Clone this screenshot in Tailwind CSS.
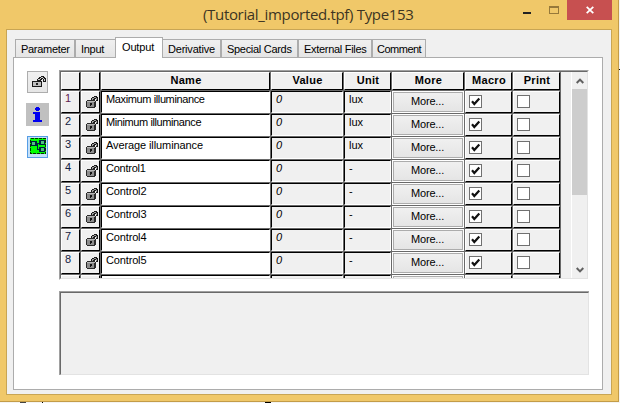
<!DOCTYPE html>
<html lang="en">
<head>
<meta charset="utf-8">
<title>Type153</title>
<script src="https://cdn.jsdelivr.net/npm/@tailwindcss/browser@4"></script>
</head>
<body class="w-[620px] h-[403px] overflow-hidden bg-[#f4f4f2] relative font-['Liberation_Sans',Arial,sans-serif] text-[11px] leading-[13px] text-black">
<svg width="0" height="0" class="absolute">
  <defs>
    <symbol id="lock" viewBox="0 0 12 12" shape-rendering="crispEdges">
      <path d="M5 5V2h1V1h2V0h3v1h1v4h-2V3H9v1H8v1z" fill="#1a1a1a"/>
      <path d="M6 2h2V1h2v1h1v2h-1V2H8v1H7v1H6z" fill="#a0a0a0"/>
      <path d="M1 4h8v1h1v6H9v1H1v-1H0V5h1z" fill="#2a2a2a"/>
      <path d="M1 6h7v5H1z" fill="#8c8c8c"/>
      <path d="M1 5h8v1H1z" fill="#b8b8b8"/>
      <path d="M4 7h2v2H5v1H4z" fill="#111"/>
    </symbol>
    <symbol id="biglock" viewBox="0 0 14 11" shape-rendering="crispEdges">
      <path d="M5 5V3h1V2h1V1h2V0h3v1h1v1h1v4h-3V3h-1v1H9v1z" fill="#1a1a1a"/>
      <path d="M6 4V3h2V2h1V1h2v1h1v1h1v2h-1V3h-1V2H9v1H8v1z" fill="#d0d0d0"/>
      <path d="M0 5h10v6H0z" fill="#1a1a1a"/>
      <path d="M1 6h8v4H1z" fill="#c0c0c0"/>
      <path d="M4 7h2v2H4z" fill="#222"/>
    </symbol>
    <symbol id="check" viewBox="0 0 13 13">
      <path d="M3 6.3 5.3 9 10.3 3.500" fill="none" stroke="#111" stroke-width="2.2"/>
    </symbol>
  </defs>
</svg>
<div class="w-[619px] h-[402px] bg-[#f0c869] border-r border-b border-[#c39c48] pl-[6px] flex flex-col">
  <header class="h-[29px] flex relative">
    <h1 class="pl-[197px] pt-[4px] font-['Open_Sans','Noto_Sans',sans-serif] text-[15px] leading-[20px] text-[#3d3522] whitespace-nowrap tracking-[-0.33px]">(Tutorial_imported.tpf) Type153</h1>
    <div class="absolute left-[517px] top-[12px] w-[8px] h-[2px] bg-[#222]"></div>
    <div class="absolute left-[543px] top-[6px] w-[10px] h-[8px] border border-t-2 border-[#96793a]"></div>
    <div class="absolute left-[561px] top-0 w-[45px] h-[20px] bg-[#c75050] flex items-center justify-center">
      <svg width="8" height="8" viewBox="0 0 8 8"><path d="M.7.9 7.3 7.1M7.3.9.7 7.1" stroke="#fff" stroke-width="1.8"/></svg>
    </div>
  </header>
  <main class="w-[606px] h-[366px] bg-[#f0f0f0] border border-[#c8a554] pl-[6px] pt-[7px]">
    <nav class="flex items-end h-[21px] pl-[2px] relative z-10 -mb-px whitespace-nowrap tracking-[-0.3px]">
      <div class="w-[60px] h-[19px] border border-[#acacac] bg-linear-to-b from-[#f0f0f0] to-[#e5e5e5] pl-[5px] pt-[3px]">Parameter</div>
      <div class="w-[40px] h-[19px] border border-r-0 border-[#acacac] bg-linear-to-b from-[#f0f0f0] to-[#e5e5e5] pl-[5px] pt-[3px]">Input</div>
      <div class="w-[48px] h-[21px] border border-b-0 border-[#acacac] bg-white pl-[6px] pt-[3px] tracking-[-0.15px]">Output</div>
      <div class="w-[58px] h-[19px] border border-l-0 border-[#acacac] bg-linear-to-b from-[#f0f0f0] to-[#e5e5e5] pl-[5px] pt-[3px] tracking-[-0.2px]">Derivative</div>
      <div class="w-[77px] h-[19px] border border-[#acacac] bg-linear-to-b from-[#f0f0f0] to-[#e5e5e5] pl-[5px] pt-[3px]">Special Cards</div>
      <div class="w-[74px] h-[19px] border border-[#acacac] bg-linear-to-b from-[#f0f0f0] to-[#e5e5e5] pl-[5px] pt-[3px]">External Files</div>
      <div class="w-[54px] h-[19px] border border-[#acacac] bg-linear-to-b from-[#f0f0f0] to-[#e5e5e5] pl-[4px] pt-[3px] tracking-[-0.5px]">Comment</div>
    </nav>
    <section class="w-[590px] h-[333px] bg-white border border-[#acacac] flex pt-[12px]">
      <aside class="w-[45px] pl-[12px] flex flex-col">
        <div class="mt-px ml-px w-[21px] h-[22px] border border-[#adadad] bg-linear-to-b from-[#f0f0f0] to-[#e6e6e6] pl-[4px] pt-[4px]"><svg width="14" height="11"><use href="#biglock"/></svg></div>
        <div class="mt-[10px] w-[23px] h-[23px] bg-[#c0c0c0] pl-[7px] pt-[4px]">
          <svg width="9" height="15" viewBox="0 0 9 15" shape-rendering="crispEdges"><path d="M3 0h3v1h1v2H6v1H3V3H2V1h1zM0 5h7v8h2v2H0v-2h2V7H0z" fill="#0000f0"/></svg>
        </div>
        <div class="mt-[10px] ml-px w-[21px] h-[22px] border border-[#569de5] bg-[#c4e0f8] pl-[2px] pt-px">
          <svg width="16" height="16" viewBox="0 0 16 16" shape-rendering="crispEdges"><path d="M0 0h16v16H0z" fill="#0f0"/><path d="M.5.5h15v15H.5z" fill="none" stroke="#030" stroke-dasharray="3 1"/><path d="M1 3h6v5H1zM9 2h6v5H9zM9 9h6v5H9zM7 5h2v1H8v5h1v1H7z" fill="#002040"/><path d="M2 4h3v3H2zM11 3h3v3h-3zM11 10h3v3h-3z" fill="#50c080"/></svg>
        </div>
      </aside>
      <div class="flex flex-col">
        <div class="w-[530px] h-[210px] border-t border-l border-t-[#a0a0a0] border-l-[#a0a0a0] border-b border-r border-b-white border-r-white">
          <div class="w-[528px] h-[208px] border border-t-[#696969] border-l-[#696969] border-b-[#e3e3e3] border-r-[#e3e3e3] bg-[#f0f0f0] flex overflow-hidden">
            <div id="grid" class="w-[500px] h-[206px] shrink-0 overflow-hidden"></div>
            <div class="w-[10px] shrink-0"></div>
            <div class="w-[16px] border-l border-white flex flex-col items-center shrink-0">
              <div class="h-[17px] flex items-center"><svg width="8" height="6" viewBox="0 0 8 6"><path d="M.7 5 4 1.600 7.300 5" fill="none" stroke="#606060" stroke-width="2"/></svg></div>
              <div class="w-[15px] h-[106px] bg-[#cdcdcd]"></div>
              <div class="grow"></div>
              <div class="h-[17px] flex items-center"><svg width="8" height="6" viewBox="0 0 8 6"><path d="M.7 1 4 4.400 7.300 1" fill="none" stroke="#606060" stroke-width="2"/></svg></div>
            </div>
          </div>
        </div>
        <div class="mt-[11px] w-[530px] h-[84px] border-t border-l border-[#a0a0a0]">
          <div class="h-full border border-t-[#696969] border-l-[#696969] border-b-[#e3e3e3] border-r-[#e3e3e3] bg-[#f0f0f0]"></div>
        </div>
      </div>
    </section>
  </main>
</div>
<div class="absolute left-[20px] top-[402px] w-[6px] h-px bg-[#444]"></div>
<div class="absolute left-[42px] top-[402px] w-px h-px bg-black"></div>
<div class="absolute left-[265px] top-[402px] w-[6px] h-px bg-black"></div>
<div class="absolute left-[619px] top-[69px] w-px h-px bg-black"></div>
<script>
const cols = 'grid grid-cols-[20px_20px_170px_73px_48px_73px_48px_48px]';
const wrap = 'border-r border-b border-[#696969]';
const raised = 'h-full border border-t-white border-l-white border-b-black border-r-black bg-[#f0f0f0]';
const sunken = 'h-full border border-t-black border-l-black border-b-white border-r-white whitespace-nowrap pl-[4px] pt-px';
const heads = ['', '', 'Name', 'Value', 'Unit', 'More', 'Macro', 'Print'];
let html = `<div class="${cols} h-[19px]">` + heads.map(t =>
  `<div class="${wrap}"><div class="${raised} font-bold text-center leading-[14px] tracking-[0.3px] pl-px">${t}</div></div>`).join('') + '</div>';
const rows = [
  ['Maximum illuminance', 'lux', 'tracking-[-0.38px]'],
  ['Minimum illuminance', 'lux', 'tracking-[-0.4px]'],
  ['Average illuminance', 'lux', 'tracking-[-0.1px]'],
  ['Control1', '-', 'tracking-[-0.25px]'],
  ['Control2', '-', 'tracking-[-0.15px]'],
  ['Control3', '-', 'tracking-[-0.15px]'],
  ['Control4', '-', 'tracking-[-0.15px]'],
  ['Control5', '-', 'tracking-[-0.15px]'],
  ['', '', ''],
];
rows.forEach(([name, unit, tracking], i) => {
  html += `<div class="${cols} h-[23px]">
    <div class="${wrap}"><div class="${raised} pl-[3px] ${i ? 'text-[#102040]' : 'text-[#602050]'}">${i < 8 ? i + 1 : '<i class="block w-[3px] h-px ml-px mt-[2px] bg-black"></i>'}</div></div>
    <div class="${wrap}"><div class="${raised} pl-[4px] pt-[4px]"><svg width="12" height="12"><use href="#lock"/></svg></div></div>
    <div class="${wrap}"><div class="${sunken} bg-white ${tracking}">${name}</div></div>
    <div class="${wrap}"><div class="${sunken} bg-[#f0f0f0] italic">${name && 0}</div></div>
    <div class="${wrap}"><div class="${sunken} bg-[#f0f0f0]">${unit}</div></div>
    <div class="${wrap}"><div class="h-full border border-white bg-white"><div class="h-full border border-[#acacac] bg-linear-to-b from-[#f0f0f0] to-[#e5e5e5] text-center leading-[17px] tracking-[-0.15px] pr-px">${name && 'More...'}</div></div></div>
    <div class="${wrap}"><div class="${raised} pl-[3px] pt-[3px]"><div class="w-[13px] h-[13px] border border-[#707070] bg-white"><svg width="13" height="13" class="-m-px"><use href="#check"/></svg></div></div></div>
    <div class="${wrap}"><div class="${raised} pl-[3px] pt-[3px]"><div class="w-[13px] h-[13px] border border-[#707070] bg-white"></div></div></div>
  </div>`;
});
document.getElementById('grid').innerHTML = html;
</script>
</body>
</html>
